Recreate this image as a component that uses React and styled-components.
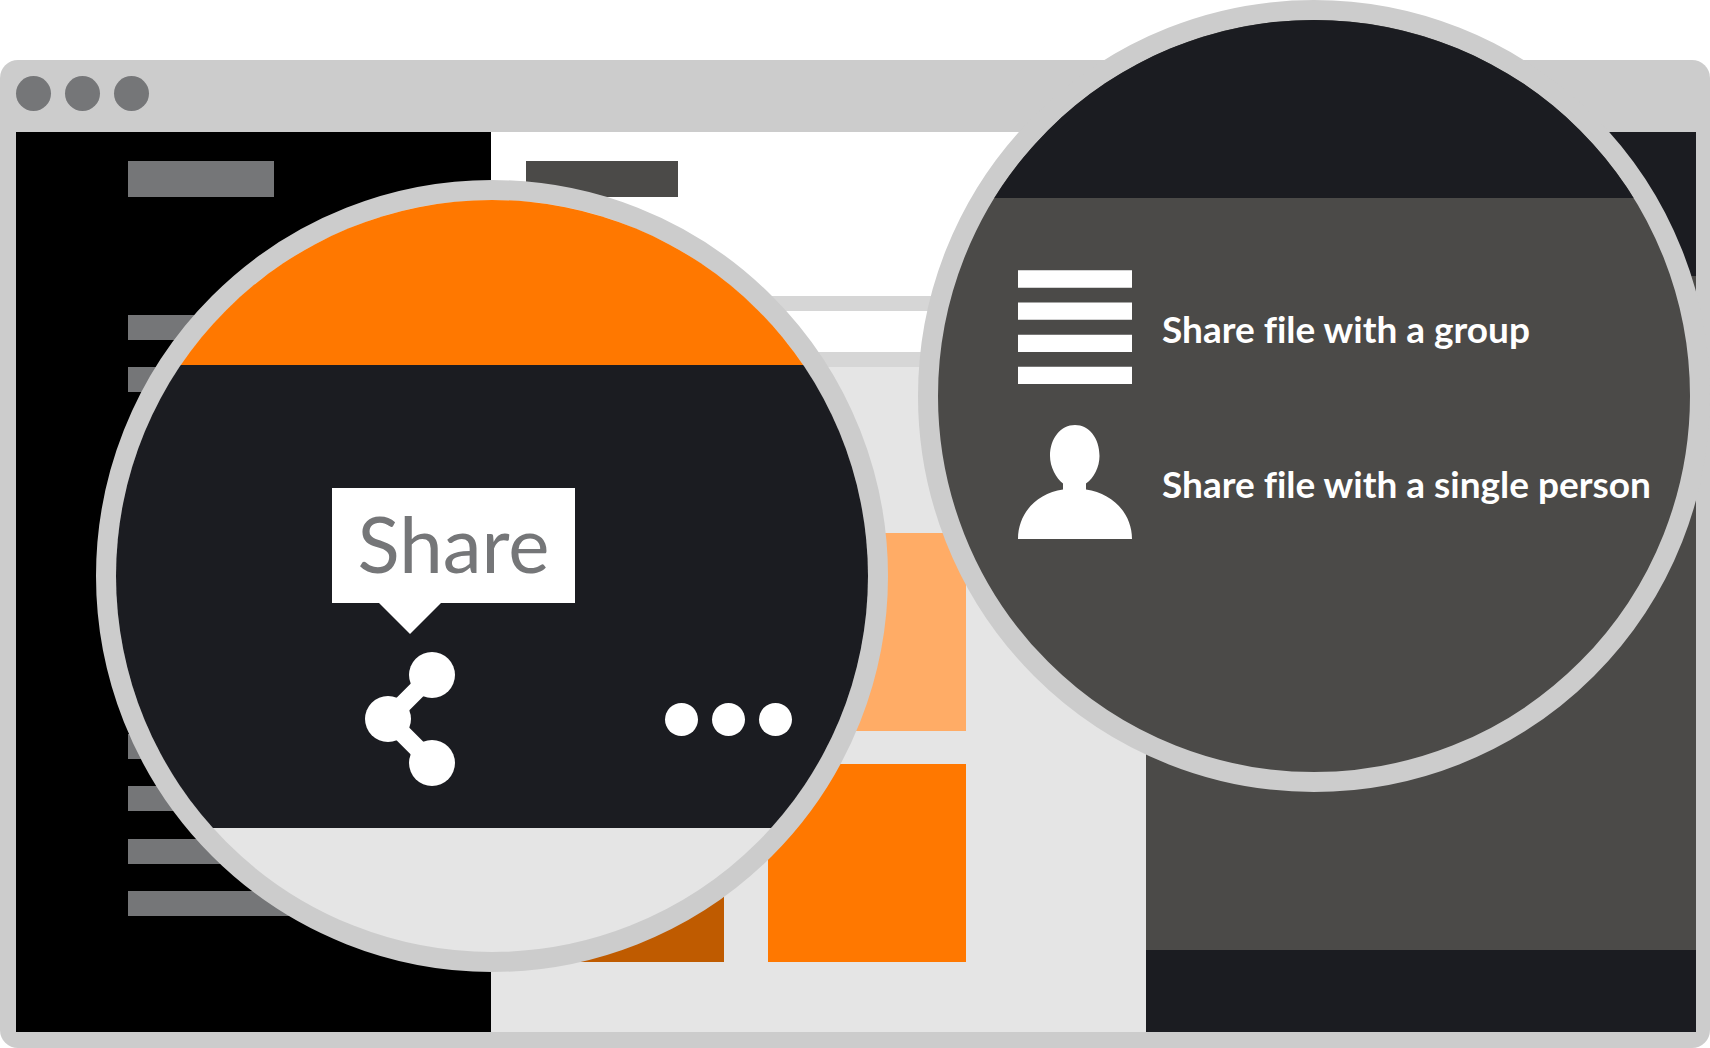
import React from 'react'
import styled, { createGlobalStyle } from 'styled-components'

const colors = {
  frame: '#cccccc',
  grey: '#757678',
  charcoal: '#4b4a48',
  ink: '#1b1c21',
  light: '#e5e5e5',
  line: '#d6d6d6',
  orange: '#ff7800',
  orangeLight: '#ffac66',
  orangeDark: '#bf5b00',
}

const GlobalStyle = createGlobalStyle`
  * {
    box-sizing: border-box;
  }
  body {
    margin: 0;
    background: #ffffff;
    font-family: 'Lato', 'Liberation Sans', sans-serif;
    font-variant-ligatures: none;
  }
`

const Scene = styled.div`
  position: relative;
  display: flex;
  flex-direction: column;
  min-height: 100vh;
  padding-top: 60px;
  overflow: hidden;
`

/* Browser window */

const BrowserFrame = styled.main`
  flex: 1;
  display: flex;
  flex-direction: column;
  padding: 0 14px 16px 16px;
  border-radius: 18px;
  background: ${colors.frame};
`

const TitleBar = styled.header`
  display: flex;
  gap: 14px;
  height: 72px;
  padding-top: 16px;
`

const Dot = styled.span`
  width: ${({ $size }) => $size}px;
  height: ${({ $size }) => $size}px;
  border-radius: 50%;
  background: ${({ $color }) => $color};
`

const Columns = styled.div`
  flex: 1;
  display: grid;
  grid-template-columns: 475fr 655fr 550fr;
`

const Sidebar = styled.aside`
  display: flex;
  flex-direction: column;
  padding: 29px 0 116px 112px;
  background: #000000;
`

const Bar = styled.div`
  flex-shrink: 0;
  width: ${({ $width }) => $width}px;
  height: ${({ $height }) => $height}px;
  background: ${({ $color }) => $color};
`

const SidebarList = styled.div`
  flex: 1;
  display: flex;
  flex-direction: column;
  justify-content: space-between;
  margin-top: 118px;
`

const Content = styled.section`
  display: flex;
  flex-direction: column;
  background: ${colors.light};
`

const ContentHeader = styled.div`
  height: 164px;
  padding: 29px 0 0 35px;
  background: #ffffff;
`

const ContentToolbar = styled.div`
  height: 71px;
  border-top: 15px solid ${colors.line};
  border-bottom: 15px solid ${colors.line};
  background: #ffffff;
`

const Tiles = styled.div`
  flex: 1;
  display: grid;
  grid-template-columns: repeat(2, 198px);
  grid-auto-rows: 198px;
  gap: 33px 44px;
  align-content: end;
  padding: 0 0 70px 35px;
`

const Tile = styled.div`
  background: ${({ $color }) => $color};
`

const Panel = styled.aside`
  display: flex;
  flex-direction: column;
  background: ${colors.charcoal};
`

const PanelHeader = styled.div`
  height: 144px;
  background: ${colors.ink};
`

const PanelFooter = styled.div`
  height: 82px;
  margin-top: auto;
  background: ${colors.ink};
`

/* Magnifying lenses, laid over the window */

const Lens = styled.section`
  position: absolute;
  display: flex;
  flex-direction: column;
  width: 792px;
  height: 792px;
  border: 20px solid ${colors.frame};
  border-radius: 50%;
  background: ${({ $background }) => $background};
  overflow: hidden;
`

const ShareLens = styled(Lens)`
  top: 180px;
  left: 96px;
`

const OptionsLens = styled(Lens)`
  top: 0;
  right: 0;
`

const Band = styled.div`
  height: ${({ $height }) => $height}px;
  background: ${({ $color }) => $color};
`

const ActionBand = styled.div`
  height: 463px;
  padding: 123px 76px 0 216px;
  background: ${colors.ink};
`

const Tooltip = styled.div`
  position: relative;
  width: 243px;
  height: 115px;
  margin-bottom: 49px;
  background: #ffffff;
  color: ${colors.grey};
  font-size: 78px;
  line-height: 110px;
  text-align: center;

  &::after {
    content: '';
    position: absolute;
    top: 100%;
    left: 47px;
    border: 31px solid transparent;
    border-top-color: #ffffff;
    border-bottom: 0;
  }
`

const Actions = styled.div`
  display: flex;
  align-items: center;
  justify-content: space-between;
  padding-left: 33px;
`

const Button = styled.button`
  display: flex;
  align-items: center;
  gap: ${({ $gap }) => $gap || 0}px;
  padding: 0;
  border: 0;
  background: none;
  color: #ffffff;
  font-family: inherit;
  font-size: 37px;
  font-weight: 700;
  line-height: 48px;
  font-variant-ligatures: none;
  white-space: nowrap;
  cursor: pointer;
`

const Label = styled.span`
  padding-top: 4px;
`

const Icon = styled.svg`
  display: block;
  flex-shrink: 0;
  fill: currentColor;
`

const Options = styled.div`
  display: flex;
  flex-direction: column;
  gap: 41px;
  padding: 72px 0 0 80px;
`

function ShareIcon() {
  return (
    <Icon width="90" height="134" viewBox="0 0 90 134">
      <path d="M67 23 L23 67 L67 111" fill="none" stroke="currentColor" strokeWidth="18" />
      <circle cx="67" cy="23" r="23" />
      <circle cx="23" cy="67" r="23" />
      <circle cx="67" cy="111" r="23" />
    </Icon>
  )
}

function GroupIcon() {
  return (
    <Icon width="114" height="114" viewBox="0 0 114 114">
      <path d="M0 0.3h114v17.4H0z M0 32.4h114v17.4H0z M0 64.7h114v17.4H0z M0 96.8h114v17.2H0z" />
    </Icon>
  )
}

function PersonIcon() {
  return (
    <Icon width="114" height="114" viewBox="0 0 114 114">
      <path d="M57 0C71 0 81.500 13 81.500 31C81.500 42 76 53 68 58.500V64.500C94 68 114 88 114 114H0C0 88 19 68 45 64.500V58.500C38 53 32 42 32 31C32 13 43 0 57 0Z" />
    </Icon>
  )
}

const sidebarRows = Array.from({ length: 12 }, (_, i) => i)

function App() {
  return (
    <Scene>
      <GlobalStyle />
      <BrowserFrame>
        <TitleBar>
          <Dot $size={35} $color={colors.grey} />
          <Dot $size={35} $color={colors.grey} />
          <Dot $size={35} $color={colors.grey} />
        </TitleBar>
        <Columns>
          <Sidebar>
            <Bar $width={146} $height={36} $color={colors.grey} />
            <SidebarList>
              {sidebarRows.map((row) => (
                <Bar key={row} $width={200} $height={25} $color={colors.grey} />
              ))}
            </SidebarList>
          </Sidebar>
          <Content>
            <ContentHeader>
              <Bar $width={152} $height={36} $color={colors.charcoal} />
            </ContentHeader>
            <ContentToolbar />
            <Tiles>
              <Tile $color={colors.orange} />
              <Tile $color={colors.orangeLight} />
              <Tile $color={colors.orangeDark} />
              <Tile $color={colors.orange} />
            </Tiles>
          </Content>
          <Panel>
            <PanelHeader />
            <PanelFooter />
          </Panel>
        </Columns>
      </BrowserFrame>

      <ShareLens $background={colors.light}>
        <Band $height={165} $color={colors.orange} />
        <ActionBand>
          <Tooltip role="tooltip" id="share-tip">Share</Tooltip>
          <Actions>
            <Button type="button" aria-labelledby="share-tip">
              <ShareIcon />
            </Button>
            <Button type="button" aria-label="More" $gap={14}>
              <Dot $size={33} $color="#ffffff" />
              <Dot $size={33} $color="#ffffff" />
              <Dot $size={33} $color="#ffffff" />
            </Button>
          </Actions>
        </ActionBand>
      </ShareLens>

      <OptionsLens $background={colors.charcoal}>
        <Band $height={178} $color={colors.ink} />
        <Options>
          <Button type="button" $gap={30}>
            <GroupIcon />
            <Label>Share file with a group</Label>
          </Button>
          <Button type="button" $gap={30}>
            <PersonIcon />
            <Label>Share file with a single person</Label>
          </Button>
        </Options>
      </OptionsLens>
    </Scene>
  )
}

export default App
